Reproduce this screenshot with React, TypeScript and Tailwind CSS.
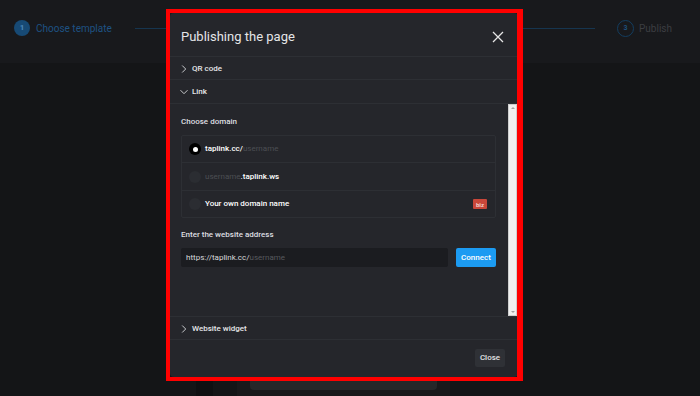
import React from "react";

function Chevron({ down }: { down?: boolean }) {
  return (
    <svg width="8" height="8" viewBox="0 0 8 8" className="shrink-0">
      {down ? (
        <path d="M0.5 2.2 L4 5.7 L7.5 2.2" fill="none" stroke="#c9cacd" strokeWidth="1" />
      ) : (
        <path d="M2.2 0.5 L5.7 4 L2.2 7.5" fill="none" stroke="#c9cacd" strokeWidth="1" />
      )}
    </svg>
  );
}

function Radio({ checked }: { checked?: boolean }) {
  return checked ? (
    <span className="w-[12px] h-[12px] rounded-full bg-black flex items-center justify-center shrink-0">
      <span className="w-[5px] h-[5px] rounded-full bg-white" />
    </span>
  ) : (
    <span className="w-[12px] h-[12px] rounded-full bg-[#2b2d32] shrink-0" />
  );
}

export default function App() {
  return (
    <div
      className="relative w-[700px] h-[396px] overflow-hidden bg-[#141517]"
      style={{ fontFamily: "Roboto, 'Liberation Sans', sans-serif" }}
    >
      {/* top stepper bar */}
      <div className="h-[63px] bg-[#18191c] flex items-start pt-[19px] pl-[14px] pr-[28px]">
        <div className="flex items-center gap-[6px] h-[18px]">
          <span className="w-[16px] h-[16px] rounded-full bg-[#174a75] text-[#4d87b8] text-[8px] font-bold flex items-center justify-center">
            1
          </span>
          <span className="text-[10px] text-[#1e5283]">Choose template</span>
        </div>
        <div className="ml-[23px] mt-[8.5px] w-[40px] h-[1px] bg-[#16354f]" />
        <div className="flex-1" />
        <div className="mt-[8.5px] w-[79px] h-[1px] bg-[#16354f]" />
        <div className="ml-[22px] flex items-center gap-[5px] h-[18px]">
          <span className="w-[17px] h-[17px] rounded-full border-[1.5px] border-[#133d5f] text-[#1d4f7c] text-[7px] font-bold flex items-center justify-center">
            3
          </span>
          <span className="text-[10px] text-[#3c3e42]">Publish</span>
        </div>
      </div>

      {/* background shapes behind modal */}
      <div className="absolute left-[196px] top-[380px] w-[17px] h-[16px] bg-[#0f1012]" />
      <div className="absolute left-[237px] top-[380px] w-[213px] h-[16px] bg-[#19191b]" />
      <div className="absolute left-[250px] top-[380px] w-[187px] h-[10px] rounded-b-[4px] bg-[#262729]" />

      {/* modal */}
      <div className="absolute left-[170px] top-[13px] w-[348px] h-[364px] rounded-[4px] bg-[#25262b] flex flex-col text-[#e6e7e9]">
        <div className="h-[44px] flex items-center justify-between pl-[11px] pr-[14px] pt-[4px] border-b border-[#2d2f34]">
          <span className="text-[13px] text-[#e4e5e7]">Publishing the page</span>
          <svg width="12" height="12" viewBox="0 0 12 12">
            <path d="M1 1 L11 11 M11 1 L1 11" stroke="#e6e6e6" strokeWidth="1.3" />
          </svg>
        </div>
        <div className="h-[23px] flex items-center gap-[4px] pl-[10px] pt-[1px] border-b border-[#2d2f34]">
          <Chevron />
          <span className="text-[8px] font-medium">QR code</span>
        </div>
        <div className="h-[24px] flex items-center gap-[4px] pl-[10px] pt-[1px] border-b border-[#2d2f34]">
          <Chevron down />
          <span className="text-[8px] font-medium">Link</span>
        </div>
        {/* scroll area */}
        <div className="h-[212px] flex">
          <div className="flex-1 flex flex-col pl-[11px] pr-[12px] pt-[13px]">
            <div className="text-[8px] font-medium text-[#dedfe1] h-[10px] leading-[10px]">Choose domain</div>
            <div className="mt-[8px] border border-[#2d2f34] rounded-[2px] flex flex-col">
              <div className="h-[27px] flex items-center gap-[4px] pl-[7px] border-b border-[#2d2f34]">
                <Radio checked />
                <span className="text-[8px] font-medium text-white">
                  taplink.cc/<span className="font-normal text-[#4c4e53]">username</span>
                </span>
              </div>
              <div className="h-[28px] flex items-center gap-[4px] pl-[7px] border-b border-[#2d2f34]">
                <Radio />
                <span className="text-[8px] font-medium text-white">
                  <span className="font-normal text-[#4c4e53]">username</span>.taplink.ws
                </span>
              </div>
              <div className="h-[26px] flex items-center gap-[4px] pl-[7px] pr-[8px]">
                <Radio />
                <span className="text-[8px] font-medium text-white flex-1">Your own domain name</span>
                <span className="h-[10px] px-[3px] rounded-[1px] bg-[#c9473a] text-[6px] font-bold text-[#f1d0cc] flex items-center">
                  biz
                </span>
              </div>
            </div>
            <div className="mt-[12px] text-[8px] font-medium text-[#dedfe1] h-[10px] leading-[10px]">
              Enter the website address
            </div>
            <div className="mt-[8px] flex items-center gap-[8px]">
              <div className="flex-1 h-[19px] bg-[#1b1c20] rounded-[2px] flex items-center pl-[5px] text-[8px] text-[#d8d9db]">
                https://taplink.cc/<span className="text-[#57595e]">username</span>
              </div>
              <div className="w-[40px] h-[19px] rounded-[2px] bg-[#1c9bf2] text-white text-[8px] font-medium flex items-center justify-center">
                Connect
              </div>
            </div>
          </div>
          {/* classic scrollbar */}
          <div className="w-[9px] bg-[#f1f1f1] border border-[#cfcfcf] flex flex-col items-center justify-between py-[2px] mr-[1px]">
            <span className="w-0 h-0 border-l-[2px] border-r-[2px] border-b-[2px] border-l-transparent border-r-transparent border-b-[#a3a3a3]" />
            <span className="w-0 h-0 border-l-[2px] border-r-[2px] border-t-[2px] border-l-transparent border-r-transparent border-t-[#a3a3a3]" />
          </div>
        </div>
        <div className="h-[24px] flex items-center gap-[4px] pl-[10px] pt-[1px] border-t border-b border-[#2d2f34]">
          <Chevron />
          <span className="text-[8px] font-medium">Website widget</span>
        </div>
        <div className="flex-1 flex items-start justify-end pr-[13px] pt-[9px]">
          <div className="w-[30px] h-[18px] rounded-[2px] bg-[#2f3136] text-[8px] font-medium text-[#e2e3e5] flex items-center justify-center">
            Close
          </div>
        </div>
      </div>

      {/* red annotation frame */}
      <div className="absolute left-[166px] top-[9px] w-[357px] h-[372px] border-[4px] border-[#ff0000] border-r-[6px]" />
    </div>
  );
}
